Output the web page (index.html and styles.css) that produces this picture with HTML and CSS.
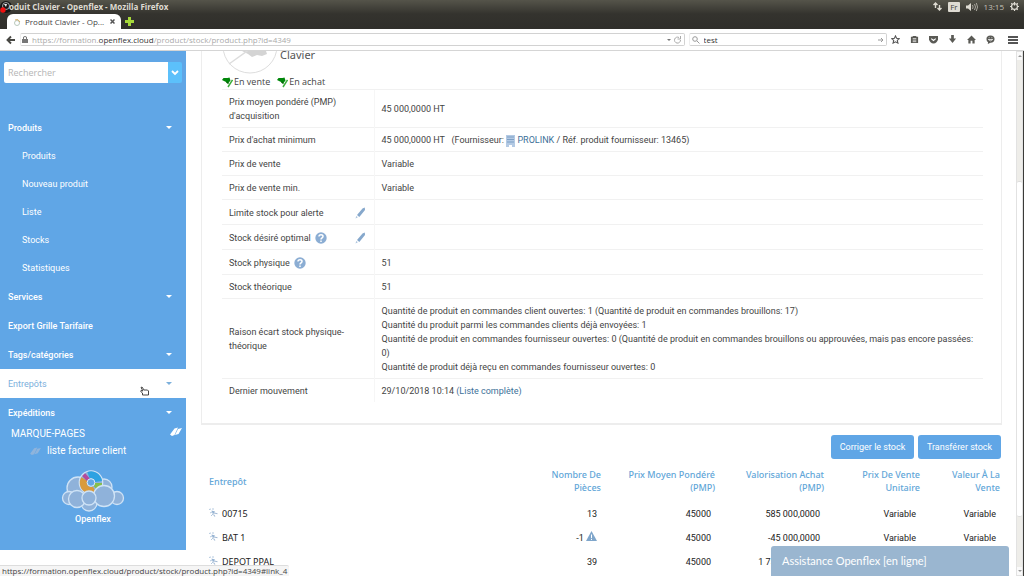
FILE: index.html
```html
<!DOCTYPE html>
<html lang="fr">
<head>
<meta charset="utf-8">
<title>Produit Clavier - Openflex</title>
<link rel="stylesheet" href="styles.css">
</head>
<body>
<svg class="defs" aria-hidden="true">
  <symbol id="flag" viewBox="0 0 11 11"><path d="M0 3 1.500 1h4L7.500.5l1 3L6 6.500 4 5z" fill="#00860a"/><path d="M10.500 3 6 10" stroke="#3cae3c" stroke-width="1.500"/><path d="m4.500 5 2 1.500" stroke="#006400" stroke-width="1.500"/></symbol>
  <symbol id="pencil" viewBox="0 0 11 12"><path d="M.5 11.500 1.300 9l1.500 1.300z" fill="#a9c2dc"/><path d="M2 8 7.500 1.500 9.800.5l.2 2.500L4.300 10z" fill="#86a8cc"/></symbol>
  <symbol id="help" viewBox="0 0 12 12"><circle cx="6" cy="6" r="5.700" fill="#8badd3"/><path d="M4 4.500C4 2 8.200 2.200 8 4.500 8 5.800 6 5.900 6 7.500M6 8.600v1.500" fill="none" stroke="#fff" stroke-width="1.500"/></symbol>
  <symbol id="pin" viewBox="0 0 9 9"><path d="M0 1.500 2 1M4 0v2M1 5l2-1M2 8l2-2" stroke="#b4c9df" stroke-width="1"/><path d="m2.500 2.500 3.500 1-2 3z" fill="#94b2d2"/><path d="m5 5 3.500.8M4.500 6.500 6 8.500" stroke="#a3bad5" stroke-width="1.100"/></symbol>
  <symbol id="books" viewBox="0 0 12 10"><path d="M0 7.500 4.500 1.500 8 .5 4.500 8 2 9zM5 8 8 2 12 1 8.500 7z" fill="currentColor"/></symbol>
</svg>

<header class="browser">
  <div class="titlebar">
    <svg class="app-icon" viewBox="0 0 12 12"><circle cx="6" cy="6" r="6" fill="#161616"/><circle cx="6" cy="5" r="3.500" fill="none" stroke="#ddd" stroke-width=".7"/><path d="M4 3h3L6 6z" fill="#eee"/><circle cx="3" cy="9" r="2.700" fill="#f01010"/></svg>
    <span class="window-title">oduit Clavier - Openflex - Mozilla Firefox</span>
    <div class="indicators">
      <svg width="9" height="9" viewBox="0 0 9 9"><path d="M2.500 6V1M.5 3l2-2 2 2M6.500 3v5M4.500 6l2 2 2-2" fill="none" stroke="#dedbd2" stroke-width="1.400"/></svg>
      <span class="lang">Fr</span>
      <svg width="12" height="10" viewBox="0 0 12 10"><path d="M0 3.500h2L5 1v8L2 6.500H0z" fill="#dedbd2"/><path d="M6.500 3q1.200 2 0 4M8.500 2q2 3 0 6M10.300 1q2.500 4 0 8" fill="none" stroke="#aaa79e"/></svg>
      <time>13:15</time>
      <svg width="9" height="9" viewBox="0 0 10 10"><circle cx="5" cy="5" r="3.300" fill="none" stroke="#dedbd2" stroke-width="1.400"/><path d="M5 0v4M0 5h1.500M8.500 5H10M5 8.500V10M1.400 1.400l1 1M8.600 1.400l-1 1M1.400 8.600l1-1M8.600 8.600l-1-1" stroke="#dedbd2" stroke-width="1.300"/></svg>
    </div>
  </div>
  <div class="tabs">
    <div class="tab">
      <svg width="8" height="8" viewBox="0 0 8 8"><circle cx="4" cy="5" r="2.500" fill="none" stroke="#b9c9bd"/><path d="M2 2q3-2 5 2" fill="none" stroke="#d8b06a"/></svg>
      <span class="tab-title">Produit Clavier - Op...</span>
      <button class="bare" aria-label="Fermer"><svg width="5" height="5" viewBox="0 0 5 5"><path d="m.5.5 4 4m0-4-4 4" stroke="#555" stroke-width="1.500"/></svg></button>
    </div>
    <button class="bare new-tab" aria-label="Nouvel onglet"><svg width="9" height="9" viewBox="0 0 9 9"><path d="M4.500 0v9M0 4.500h9" stroke="#a6d83a" stroke-width="3"/></svg></button>
  </div>
  <nav class="toolbar">
    <button class="bare" aria-label="Retour"><svg width="10" height="10" viewBox="0 0 10 10"><path d="M9 5H2M5 1.500 1.500 5 5 8.500" fill="none" stroke="#484844" stroke-width="1.900"/></svg></button>
    <div class="address">
      <svg width="6" height="7" viewBox="0 0 6 7"><path d="M0 3h6v4H0z" fill="#777"/><path d="M1.500 3V1q1.500-1 3 0v2" fill="none" stroke="#777"/></svg>
      <span class="url">https://formation.<b>openflex.cloud</b>/product/stock/product.php?id=4349</span>
      <svg width="15" height="8" viewBox="0 0 15 8"><path d="M0 3h4L2 5z" fill="#777"/><path d="M13.500 4A3 3 0 1 1 12 1.500M13.500 0v3h-3" fill="none" stroke="#aaa"/></svg>
    </div>
    <div class="search">
      <svg width="8" height="8" viewBox="0 0 8 8"><circle cx="3" cy="3" r="2.300" fill="none" stroke="#999"/><path d="m5 5 2.500 2.500" stroke="#999"/></svg>
      <input aria-label="Recherche web" value="test">
      <svg width="6" height="6" viewBox="0 0 6 6"><path d="M0 3h5M3 1l2 2-2 2" fill="none" stroke="#999"/></svg>
    </div>
    <div class="tools">
      <svg viewBox="0 0 10 10"><path d="m5 1 1.200 2.700 3 .3L7 6l.7 3L5 7.500 2.300 9 3 6 .8 4l3-.3z" fill="none" stroke="#555" stroke-width="1.200"/></svg>
      <svg viewBox="0 0 10 10"><path d="M1 2h2V1h4v1h2v7H1z" fill="#5a5a55"/><path d="M3 4h4M3 5.700h4M3 7.400h4" stroke="#fff" stroke-width=".8"/></svg>
      <svg viewBox="0 0 10 10"><path d="M0 1h10v4q-1 4-5 4.500Q1 9 0 5z" fill="#5a5a55"/><path d="m2.500 4 2.500 2 2.500-2" fill="none" stroke="#fff" stroke-width="1.300"/></svg>
      <svg viewBox="0 0 10 10"><path d="M3.500 0h3v4H9L5 9 1 4h2.500z" fill="#5a5a55"/></svg>
      <svg viewBox="0 0 10 10"><path d="m5 .5 5 5H8.500V9.500H6V6.500H4v3H1.500v-4H0z" fill="#5a5a55"/></svg>
      <svg viewBox="0 0 10 10"><path d="M5 .5q4.500 0 4.500 4T5 8.500L2 10l.3-2Q.5 7 .5 4.500.5.500 5 .5" fill="#5a5a55"/><path d="M2.500 5h5Q5 8 2.500 5M3 3h1M6 3h1" fill="none" stroke="#fff" stroke-width=".8"/></svg>
      <svg class="menu" viewBox="0 0 10 10"><path d="M0 2h10M0 5h10M0 8h10" stroke="#555" stroke-width="1.800"/></svg>
    </div>
  </nav>
</header>

<div class="page">
  <aside class="side-area">
    <div class="sidebar">
      <form class="side-search">
        <input type="text" placeholder="Rechercher" aria-label="Rechercher">
        <button type="button" aria-label="Options"><svg width="8" height="6" viewBox="0 0 8 6"><path d="m1 1 3 3 3-3" fill="none" stroke="#fff" stroke-width="1.800"/></svg></button>
      </form>
      <nav class="menu-list">
        <a class="item caret" href="#">Produits</a>
        <a class="item sub" href="#">Produits</a>
        <a class="item sub" href="#">Nouveau produit</a>
        <a class="item sub" href="#">Liste</a>
        <a class="item sub" href="#">Stocks</a>
        <a class="item sub" href="#">Statistiques</a>
        <a class="item caret" href="#">Services</a>
        <a class="item" href="#">Export Grille Tarifaire</a>
        <a class="item caret" href="#">Tags/catégories</a>
        <a class="item caret active" href="#">Entrepôts</a>
        <a class="item caret" href="#">Expéditions</a>
      </nav>
      <div class="bookmarks"><span>MARQUE-PAGES</span><svg width="12" height="10"><use href="#books"/></svg></div>
      <a class="bookmark" href="#"><svg width="11" height="9"><use href="#books"/></svg>liste facture client</a>
      <div class="brand">
        <svg width="64" height="43" viewBox="0 0 64 43">
          <g fill="#8fb2da" stroke="#cfe3f6" stroke-width="1.300">
            <circle cx="17" cy="18" r="11"/><circle cx="43" cy="17" r="8"/><circle cx="8" cy="28" r="6.500"/><circle cx="56" cy="28" r="6.500"/><circle cx="28" cy="33" r="8"/><circle cx="30" cy="12.500" r="11.700"/>
          </g>
          <g fill="none" stroke-width="7">
            <path d="M27.500 5.300A7.600 7.600 0 0 1 37.500 11.500" stroke="#2da2e2"/><path d="M37.500 13A7.600 7.600 0 0 1 35 18.500" stroke="#86bf49"/><path d="M33.500 19.500A7.600 7.600 0 0 1 23.300 9" stroke="#d99b3c"/><path d="m23.500 8.500 3-2.700" stroke="#b44a9d"/>
          </g>
          <circle cx="30" cy="12.500" r="3.800" fill="#62a6e6" stroke="#dcebf9"/>
          <g fill="#8fb2da" stroke="#cfe3f6" stroke-width="1.300"><circle cx="16" cy="29" r="8.500"/><circle cx="43" cy="26" r="10.500"/><circle cx="28" cy="28" r="7"/></g>
        </svg>
        <span>Openflex</span>
      </div>
    </div>
  </aside>

  <main class="content">
    <section class="card">
      <div class="product">
        <svg class="photo" width="56" height="24" viewBox="0 0 56 24"><circle cx="28" cy="-5" r="27" fill="#fff" stroke="#ddd"/><path d="M20 0h24l1 3-5 2-5-1-5 2-4-3z" fill="#d4d4d4"/><path d="M7 13 28-2" stroke="#ddd" stroke-width="1.500"/></svg>
        <h1>Clavier</h1>
      </div>
      <div class="flags">
        <span><svg width="11" height="11"><use href="#flag"/></svg>En vente</span>
        <span><svg width="11" height="11"><use href="#flag"/></svg>En achat</span>
      </div>
      <table class="details">
        <tr><th scope="row">Prix moyen pondéré (PMP) d'acquisition</th><td>45 000,0000 HT</td></tr>
        <tr><th scope="row">Prix d'achat minimum</th><td>45 000,0000 HT &nbsp; (Fournisseur: <svg class="building" width="9" height="12" viewBox="0 0 9 12"><path d="M0 0h9v12H6v-2H3v2H0z" fill="#b4cae4"/><path d="M1 2h7M1 4.500h7M1 7h7" stroke="#7d9fc5" stroke-width="1.200"/></svg> <a href="#">PROLINK</a> / Réf. produit fournisseur: 13465)</td></tr>
        <tr><th scope="row">Prix de vente</th><td>Variable</td></tr>
        <tr><th scope="row">Prix de vente min.</th><td>Variable</td></tr>
        <tr><th scope="row"><div class="label">Limite stock pour alerte<svg class="edit" width="11" height="12"><use href="#pencil"/></svg></div></th><td></td></tr>
        <tr><th scope="row"><div class="label">Stock désiré optimal<svg width="12" height="12"><use href="#help"/></svg><svg class="edit" width="11" height="12"><use href="#pencil"/></svg></div></th><td></td></tr>
        <tr><th scope="row"><div class="label">Stock physique<svg width="12" height="12"><use href="#help"/></svg></div></th><td>51</td></tr>
        <tr><th scope="row">Stock théorique</th><td>51</td></tr>
        <tr><th scope="row">Raison écart stock physique-théorique</th><td>Quantité de produit en commandes client ouvertes: 1 (Quantité de produit en commandes brouillons: 17)<br>Quantité du produit parmi les commandes clients déjà envoyées: 1<br>Quantité de produit en commandes fournisseur ouvertes: 0 (Quantité de produit en commandes brouillons ou approuvées, mais pas encore passées: 0)<br>Quantité de produit déjà reçu en commandes fournisseur ouvertes: 0</td></tr>
        <tr><th scope="row">Dernier mouvement</th><td>29/10/2018 10:14 <a href="#">(Liste complète)</a></td></tr>
      </table>
    </section>
    <div class="actions"><button>Corriger le stock</button><button>Transférer stock</button></div>
    <table class="stock">
      <colgroup><col><col class="c-qty"><col class="c-pmp"><col class="c-val"><col class="c-unit"><col class="c-sale"></colgroup>
      <thead><tr><th>Entrepôt</th><th>Nombre De<br>Pièces</th><th>Prix Moyen Pondéré<br>(PMP)</th><th>Valorisation Achat<br>(PMP)</th><th>Prix De Vente<br>Unitaire</th><th>Valeur À La<br>Vente</th></tr></thead>
      <tbody>
        <tr><td><svg width="9" height="9"><use href="#pin"/></svg>00715</td><td>13</td><td>45000</td><td>585 000,0000</td><td>Variable</td><td>Variable</td></tr>
        <tr><td><svg width="9" height="9"><use href="#pin"/></svg>BAT 1</td><td>-1 <svg class="warn" width="11" height="10" viewBox="0 0 11 10"><path d="m5.500 0 5.500 10H0z" fill="#7fa6cb"/><path d="M5.500 3.500V7M5.500 7.800v1.200" stroke="#fff"/></svg></td><td>45000</td><td>-45 000,0000</td><td>Variable</td><td>Variable</td></tr>
        <tr><td><svg width="9" height="9"><use href="#pin"/></svg>DEPOT PPAL</td><td>39</td><td>45000</td><td>1 755 000,0000</td><td></td><td></td></tr>
      </tbody>
    </table>
  </main>
  <div class="scrollbar"><i class="arrow up"></i><i class="thumb"></i><i class="arrow down"></i></div>
</div>

<div class="status">https://formation.openflex.cloud/product/stock/product.php?id=4349#link_4</div>
<button class="chat">Assistance Openflex [en ligne]</button>
<svg class="cursor" width="9" height="10" viewBox="0 0 9 10"><path d="M1 1.500 2 1l2 3h3.500l1 1v4h-6V7L.700 5.500 1 4.500l2 .5z" fill="#fff" stroke="#333" stroke-width=".9"/></svg>
</body>
</html>
```
FILE: styles.css
```css
* { box-sizing: border-box; }
body {
  margin: 0;
  height: 100vh;
  overflow: hidden;
  display: flex;
  flex-direction: column;
  background: #fff;
  color: #444;
  font: 9px/14px "Open Sans", sans-serif;
}
svg { flex: none; }
button, input { font: inherit; }
a { color: #3d7199; text-decoration: none; }
.defs { position: absolute; width: 0; height: 0; }
.bare { display: flex; padding: 0; border: 0; background: none; }

/* browser frame */
.browser { flex: none; background: linear-gradient(#55544a, #34332e 14px, #302f2b 28px); }
.titlebar { display: flex; align-items: center; height: 13px; padding-right: 5px; }
.app-icon { width: 12px; height: 12px; margin-right: -3px; }
.window-title { flex: 1; color: #dfdbd2; font: bold 8px/12px "Open Sans", sans-serif; }
.indicators { display: flex; align-items: center; gap: 6px; color: #c5c1b8; font-size: 8px; line-height: 12px; }
.lang { padding: 0 2px; background: #dedbd2; color: #44433e; border-radius: 1px; line-height: 10px; }
.tabs { display: flex; align-items: center; height: 16px; padding-left: 7px; gap: 4px; }
.tab {
  display: flex;
  align-items: center;
  gap: 4px;
  width: 114px;
  height: 15px;
  margin-top: 1px;
  padding: 0 6px 0 6px;
  background: #fff;
  border-radius: 6px 6px 0 0;
  font-size: 8px;
}
.tab-title { flex: 1; white-space: nowrap; }
.toolbar {
  display: flex;
  align-items: center;
  gap: 4px;
  height: 22px;
  padding: 0 6px;
  background: #fff;
  border-bottom: 1px solid #d5d5d5;
  font-size: 8px;
}
.address, .search {
  display: flex;
  align-items: center;
  gap: 4px;
  height: 13px;
  border: 1px solid #d2d2d2;
  border-left-color: #eee;
  border-radius: 2px;
}
.address { flex: 665; padding: 0 2px 0 1px; }
.search { flex: 194; padding: 0 2px; }
.search input { flex: 1; min-width: 0; height: 11px; padding: 0; border: 0; outline: 0; background: none; color: #333; }
.url { flex: 1; color: #aaa; }
.url b { color: #333; font-weight: normal; }
.tools { display: flex; align-items: center; gap: 10px; }
.tools svg { width: 9px; height: 9px; }
.tools .menu { width: 10px; height: 10px; margin-left: 3px; }

/* page */
.page { flex: 1; min-height: 0; display: flex; border-right: 1px solid #3b3b38; }
.side-area { flex: none; width: 186px; }
.sidebar {
  height: calc(100% - 26px);
  background: #60a6e6;
  color: #fff;
  font-family: Roboto, sans-serif;
}
.side-search { display: flex; padding: 11px 4px 30px; }
.side-search input {
  flex: 1;
  min-width: 0;
  height: 21px;
  padding: 0 4px;
  border: 0;
  border-radius: 2px 0 0 2px;
  background: #fff;
}
.side-search input::placeholder { color: #b5b5b5; }
.side-search input { font-family: "Open Sans", sans-serif; }
.side-search button {
  display: flex;
  align-items: center;
  justify-content: center;
  width: 14px;
  padding: 0;
  border: 0;
  border-radius: 0 2px 2px 0;
  background: #5cc0fb;
}
.menu-list { display: flex; flex-direction: column; }
.item {
  display: flex;
  align-items: center;
  justify-content: space-between;
  height: 29px;
  padding: 0 14px 0 8px;
  color: #fff;
  font-weight: 500;
}
.item.sub { height: 28px; padding-left: 22px; font-weight: 400; }
.item.caret::after { content: ""; border: 3px solid transparent; border-top-color: currentColor; border-bottom: 0; }
.item.active { background: #fff; color: #7cb0dc; font-weight: 400; }
.bookmarks { display: flex; justify-content: space-between; padding: 0 4px 0 11px; font-size: 10px; }
.bookmark { display: flex; align-items: center; gap: 6px; padding: 3px 0 0 30px; color: #fff; font-size: 10px; }
.bookmark svg { color: #8fb4dc; }
.brand { display: flex; flex-direction: column; align-items: center; padding-top: 12px; font-size: 9px; font-weight: 500; line-height: 12px; }

.content { flex: 1; min-width: 0; padding: 0 14px 0 15px; }
.card { height: 374px; padding: 0 18px 0 20px; border: solid #ededed; border-width: 0 1px 2px; }
.product { display: flex; }
.product h1 { margin: 0; padding-left: 2px; font: 11px/7px "Noto Sans", sans-serif; color: #555; }
.flags { display: flex; gap: 7px; height: 14px; font-size: 9px; }
.flags span { display: flex; align-items: center; gap: 1px; }
.details { width: 100%; border-collapse: collapse; font-family: Roboto, sans-serif; }
.details th, .details td { padding: 5px 8px 4px 7px; border-top: 1px solid #f1f1f1; font-weight: normal; text-align: left; }
.details th { width: 152px; }
.details td { border-left: 1px solid #f6f6f6; }
.label { display: flex; align-items: center; gap: 4px; height: 15px; }
.edit { margin-left: auto; }
.building { vertical-align: bottom; }

.actions { display: flex; justify-content: flex-end; gap: 4px; padding: 10px 1px 9px; }
.actions button {
  width: 83px;
  height: 24px;
  padding: 0;
  border: 0;
  border-radius: 3px;
  background: #60a6e6;
  color: #fff;
  font-family: Roboto, sans-serif;
}
.stock { width: 100%; table-layout: fixed; border-collapse: collapse; color: #222; }
.stock th { padding: 0 2px 8px; color: #62a6d8; font-family: "Noto Sans", sans-serif; font-weight: 500; line-height: 13px; text-align: right; }
.stock td { padding: 5px 6px; font-family: Roboto, sans-serif; text-align: right; white-space: nowrap; }
.stock th:first-child, .stock td:first-child { padding-left: 8px; text-align: left; }
.stock td:first-child { font-family: "Noto Sans", sans-serif; }
.stock td svg { margin-right: 4px; }
.stock td .warn { margin: 0; }
.c-qty { width: 100px; }
.c-pmp { width: 114px; }
.c-val { width: 109px; }
.c-unit { width: 96px; }
.c-sale { width: 80px; }

.scrollbar { display: flex; flex-direction: column; width: 7px; border: 1px solid #e2e2e2; background: #eeede9; }
.arrow { height: 8px; background: #fafafa; }
.arrow::after { content: ""; display: block; margin: 3px 1px; border: 2px solid transparent; border-width: 0 2px 2px; border-bottom-color: #999; }
.arrow.down::after { border-width: 2px 2px 0; border-top-color: #999; }
.thumb { flex: 338; margin-top: 121px; background: #fff; border: 1px solid #ddd; border-width: 1px 0; border-radius: 2px; }
.arrow.down { margin-top: 50px; }

/* overlays */
.status {
  position: absolute;
  left: 0;
  bottom: 0;
  padding: 0 2px;
  background: #f5f5f5;
  border-top: 1px solid #ddd;
  border-radius: 0 2px 0 0;
  color: #444;
  font-size: 8px;
  line-height: 10px;
}
.chat {
  position: absolute;
  right: 15px;
  bottom: 0;
  width: 238px;
  height: 30px;
  padding: 0 11px;
  border: 0;
  border-radius: 3px 3px 0 0;
  background: #9ab6d0;
  color: #fff;
  font: 11px/14px Lato, sans-serif;
  text-align: left;
}
.cursor { position: absolute; left: 140px; top: 386px; }
```
